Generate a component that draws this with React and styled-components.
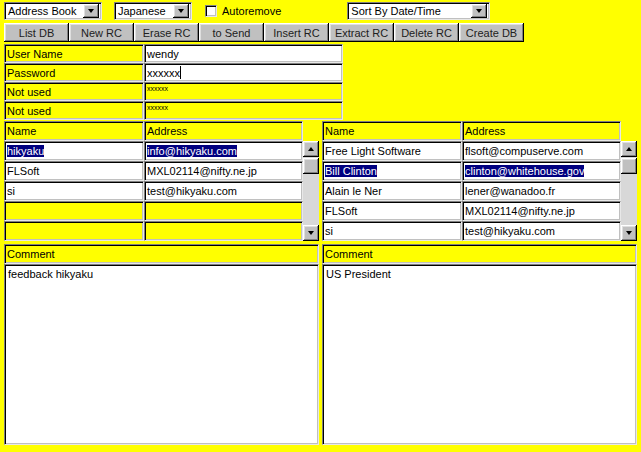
import React from "react";
import styled, { createGlobalStyle, css } from "styled-components";

const Global = createGlobalStyle`
  html, body { margin: 0; padding: 0; background: #ffff00; }
  body { font-family: "Liberation Sans", Arial, sans-serif; font-size: 11px; color: #000; }
  #root { width: 641px; height: 452px; overflow: hidden; background: #ffff00; }
`;

const Page = styled.div`
  display: flex;
  flex-direction: column;
  padding: 2px 0 0 4px;
  width: 641px;
  height: 452px;
  box-sizing: border-box;
  background: #ffff00;
`;

const sunken = css`
  border: 1px solid;
  border-color: #808080 #e8e8e8 #e8e8e8 #808080;
  box-shadow: inset 1px 1px 0 #000, inset -1px -1px 0 #c0c0c0;
  box-sizing: border-box;
`;

const raised = css`
  box-shadow: inset -1px -1px 0 #000, inset 1px 1px 0 #fff, inset -2px -2px 0 #808080, inset 2px 2px 0 #dfdfdf;
`;

const TopRow = styled.div`
  display: flex;
  align-items: center;
  height: 18px;
`;

const Combo = styled.div`
  ${sunken};
  background: #fff;
  width: ${(p) => p.$w}px;
  height: 18px;
  margin-right: ${(p) => p.$mr || 0}px;
  display: flex;
  align-items: center;
  padding: 0 2px 0 3px;
  justify-content: space-between;
`;

const ComboText = styled.span`
  line-height: 14px;
`;

const DropBtn = styled.div`
  width: 16px;
  height: 14px;
  background: #c0c0c0;
  ${raised};
  display: flex;
  align-items: center;
  justify-content: center;
`;

const Arrow = styled.div`
  width: 0;
  height: 0;
  border-left: 3.5px solid transparent;
  border-right: 3.5px solid transparent;
  border-${(p) => (p.$up ? "bottom" : "top")}: 4px solid #000;
`;

const CheckWrap = styled.label`
  display: flex;
  align-items: center;
  gap: 5px;
  margin-right: 66px;
`;

const CheckBox = styled.div`
  ${sunken};
  width: 12px;
  height: 12px;
  background: #fff;
`;

const ButtonRow = styled.div`
  display: flex;
  margin-top: 3px;
  height: 19px;
`;

const Button = styled.div`
  width: 65px;
  height: 19px;
  background: #c0c0c0;
  ${raised};
  display: flex;
  align-items: center;
  justify-content: center;
  color: #202020;
`;

const FieldTable = styled.div`
  display: grid;
  grid-template-columns: 140px 199px;
  grid-auto-rows: 19px;
  margin-top: 2px;
`;

const Cell = styled.div`
  ${sunken};
  background: ${(p) => (p.$white ? "#fff" : "#ffff00")};
  display: flex;
  align-items: center;
  padding: 0 2px;
  white-space: nowrap;
  overflow: hidden;
  font-size: 11px;
`;

const Tiny = styled.span`
  font-size: 7px;
  align-self: flex-start;
  margin-top: 2px;
  letter-spacing: 0;
`;

const Caret = styled.span`
  display: inline-block;
  width: 1px;
  height: 13px;
  background: #000;
`;

const Panels = styled.div`
  display: grid;
  grid-template-columns: 315px 315px;
  column-gap: 3px;
  margin-top: 1px;
`;

const List = styled.div`
  display: grid;
  grid-template-columns: 140px 159px 16px;
  grid-template-rows: 20px repeat(5, 20px);
`;

const Scroll = styled.div`
  grid-column: 3;
  grid-row: 2 / span 5;
  background: #d8d8d8;
  display: flex;
  flex-direction: column;
  justify-content: space-between;
  position: relative;
`;

const ScrollBtn = styled.div`
  width: 16px;
  height: 16px;
  background: #c0c0c0;
  ${raised};
  box-sizing: border-box;
  display: flex;
  align-items: center;
  justify-content: center;
`;

const Thumb = styled(ScrollBtn)`
  position: absolute;
  top: 17px;
  left: 0;
`;

const Sel = styled.span`
  background: #000080;
  color: #fff;
`;

const CommentCol = styled.div`
  display: flex;
  flex-direction: column;
  margin-top: 3px;
`;

const CommentHead = styled(Cell)`
  height: 20px;
`;

const CommentBody = styled.div`
  ${sunken};
  background: #fff;
  height: 181px;
  padding: 3px 3px;
  font-size: 11px;
  line-height: 13px;
`;

const leftRows = [
  [<Sel key="a">hikyaku</Sel>, <Sel key="b">info@hikyaku.com</Sel>, true],
  ["FLSoft", "MXL02114@nifty.ne.jp", true],
  ["si", "test@hikyaku.com", true],
  ["", "", false],
  ["", "", false],
];

const rightRows = [
  ["Free Light Software", "flsoft@compuserve.com", true],
  [<Sel key="c">Bill Clinton</Sel>, <Sel key="d">clinton@whitehouse.gov</Sel>, true],
  ["Alain le Ner", "lener@wanadoo.fr", true],
  ["FLSoft", "MXL02114@nifty.ne.jp", true],
  ["si", "test@hikyaku.com", true],
];

function AddrList({ rows }) {
  return (
    <List>
      <Cell>Name</Cell>
      <Cell>Address</Cell>
      <div />
      {rows.map((r, i) => (
        <React.Fragment key={i}>
          <Cell $white={r[2]} style={{ gridColumn: 1, gridRow: i + 2 }}>{r[0]}</Cell>
          <Cell $white={r[2]} style={{ gridColumn: 2, gridRow: i + 2 }}>{r[1]}</Cell>
        </React.Fragment>
      ))}
      <Scroll>
        <ScrollBtn><Arrow $up /></ScrollBtn>
        <Thumb />
        <ScrollBtn><Arrow /></ScrollBtn>
      </Scroll>
    </List>
  );
}

export default function App() {
  const buttons = ["List DB", "New RC", "Erase RC", "to Send", "Insert RC", "Extract RC", "Delete RC", "Create DB"];
  return (
    <>
      <Global />
      <Page>
        <TopRow>
          <Combo $w={98} $mr={12}>
            <ComboText>Address Book</ComboText>
            <DropBtn><Arrow /></DropBtn>
          </Combo>
          <Combo $w={78} $mr={13}>
            <ComboText>Japanese</ComboText>
            <DropBtn><Arrow /></DropBtn>
          </Combo>
          <CheckWrap>
            <CheckBox />
            <span>Autoremove</span>
          </CheckWrap>
          <Combo $w={143}>
            <ComboText>Sort By Date/Time</ComboText>
            <DropBtn><Arrow /></DropBtn>
          </Combo>
        </TopRow>
        <ButtonRow>
          {buttons.map((b) => (
            <Button key={b}>{b}</Button>
          ))}
        </ButtonRow>
        <FieldTable>
          <Cell>User Name</Cell>
          <Cell $white>wendy</Cell>
          <Cell>Password</Cell>
          <Cell $white>xxxxxx<Caret /></Cell>
          <Cell>Not used</Cell>
          <Cell><Tiny>xxxxxx</Tiny></Cell>
          <Cell>Not used</Cell>
          <Cell><Tiny>xxxxxx</Tiny></Cell>
        </FieldTable>
        <Panels>
          <AddrList rows={leftRows} />
          <AddrList rows={rightRows} />
          <CommentCol>
            <CommentHead>Comment</CommentHead>
            <CommentBody>feedback hikyaku</CommentBody>
          </CommentCol>
          <CommentCol>
            <CommentHead>Comment</CommentHead>
            <CommentBody>US President</CommentBody>
          </CommentCol>
        </Panels>
      </Page>
    </>
  );
}
